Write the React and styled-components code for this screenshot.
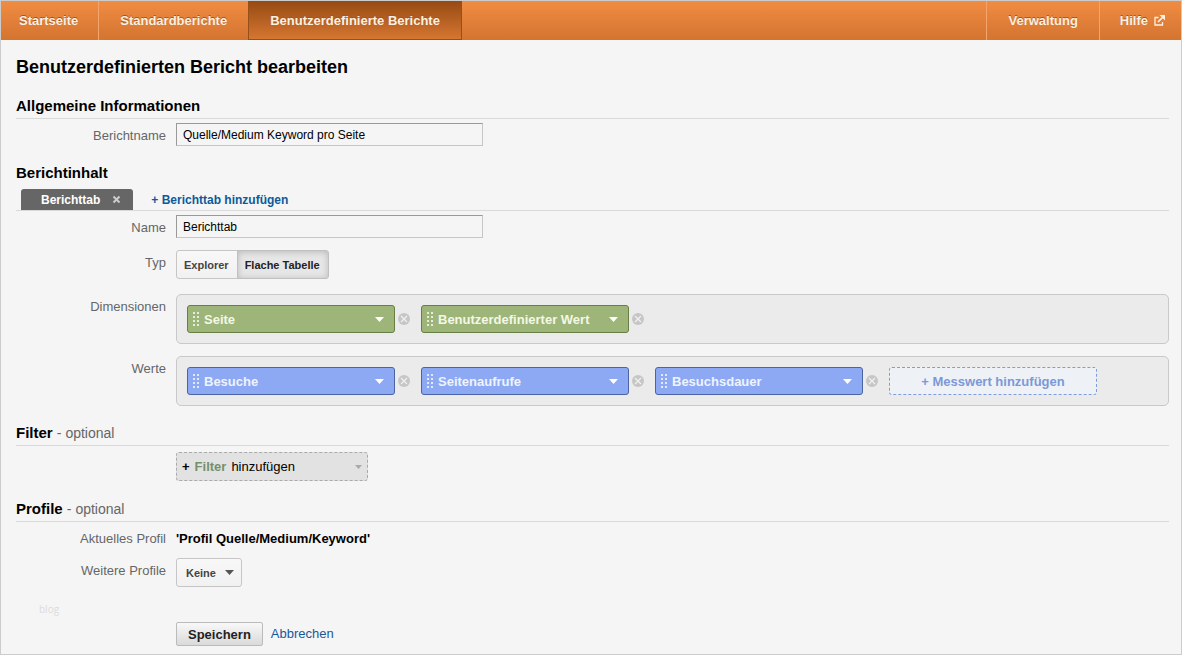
import React, { useState } from "react";
import styled, { createGlobalStyle, css } from "styled-components";

const GlobalStyle = createGlobalStyle`
  *, *::before, *::after { box-sizing: border-box; }
  body {
    margin: 0;
    background: #f5f5f5;
    color: #000;
    font-family: "Liberation Sans", Arial, sans-serif;
    font-size: 13px;
    line-height: 16px;
  }
  button, input, select { font-family: inherit; }
`;

const Frame = styled.div`
  min-height: 100vh;
  border: 1px solid #ccc;
  background: #f5f5f5;
`;

const NavBar = styled.nav`
  display: flex;
  justify-content: space-between;
  height: 39px;
  background: linear-gradient(#f18c42, #d37430);
`;

const NavGroup = styled.div`
  display: flex;
`;

const NavLink = styled.a`
  display: flex;
  align-items: center;
  gap: 6px;
  padding: 0 21px;
  color: #fdf0e0;
  font-size: 13px;
  font-weight: bold;
  text-decoration: none;
  text-shadow: 0 -1px 0 #a0561f;
  border-left: 1px solid ${(p) => (p.$first ? "transparent" : "#f3a56c")};
  ${(p) => p.$first && css`
    padding: 0 20px 0 17px;
  `}
  ${(p) => p.$last && css`
    padding: 0 16px 0 20px;
  `}
  ${(p) => p.$active && css`
    padding: 1px 21px 0;
    border: 1px solid #96501a;
    border-top: 0;
    background: linear-gradient(#964a14, #d67631);
  `}
`;

const Main = styled.main`
  padding: 15px 12px 8px 15px;
`;

const PageTitle = styled.h1`
  margin: 0;
  font-size: 18px;
  line-height: 24px;
`;

const SectionTitle = styled.h2`
  margin: 17px 0 0;
  padding-bottom: ${(p) => (p.$plain ? "6px" : "2px")};
  border-bottom: ${(p) => (p.$plain ? "0" : "1px solid #d9d9d9")};
  font-size: 15px;
  line-height: 20px;
`;

const Optional = styled.span`
  color: #666;
  font-size: 14px;
  font-weight: normal;
`;

const Fields = styled.div`
  display: grid;
  gap: ${(p) => p.$gap || "12px"};
  padding-top: ${(p) => p.$top || "4px"};
`;

const Field = styled.div`
  display: grid;
  grid-template-columns: 150px minmax(0, 1fr);
  column-gap: 10px;
  align-items: start;
`;

const FieldLabel = styled.label`
  padding-top: ${(p) => (p.$text ? "0" : "5px")};
  color: #666;
  font-size: 13px;
  line-height: 16px;
  text-align: right;
`;

const TextInput = styled.input`
  width: 307px;
  max-width: 100%;
  height: 23px;
  padding: 0 6px;
  border: 1px solid;
  border-color: #999 #c6c6c6 #c6c6c6 #999;
  border-radius: 0;
  background: #f5f5f5;
  color: #000;
  font-size: 12px;
`;

const TabBar = styled.div`
  display: flex;
  align-items: stretch;
  height: 22px;
  padding-left: 5px;
  border-bottom: 1px solid #d9d9d9;
`;

const Tab = styled.div`
  display: flex;
  align-items: center;
  gap: 12px;
  padding: 0 12px 0 20px;
  border-radius: 3px 3px 0 0;
  background: #666;
  color: #fff;
  font-size: 12px;
  font-weight: bold;
`;

const IconButton = styled.button`
  display: flex;
  padding: 0;
  border: 0;
  background: none;
  cursor: pointer;
`;

const AddTab = styled.a`
  align-self: center;
  margin-left: 18px;
  color: #0b5a9a;
  font-size: 12px;
  font-weight: bold;
  text-decoration: none;
`;

const ButtonGroup = styled.div`
  display: flex;
  margin-bottom: 3px;
`;

const Toggle = styled.button`
  height: 29px;
  padding: 0 8px 0 7px;
  border: 1px solid #c6c6c6;
  border-radius: 3px 0 0 3px;
  background: linear-gradient(#f8f8f8, #f1f1f1);
  color: #444;
  font-size: 11px;
  font-weight: bold;
  & + & {
    margin-left: -1px;
    border-radius: 0 3px 3px 0;
  }
  ${(p) => p.$on && css`
    background: #e6e6e6;
    border-color: #c0c0c0;
    color: #222;
    box-shadow: inset 0 1px 6px rgba(0, 0, 0, 0.2);
  `}
`;

const ChipBox = styled.div`
  display: flex;
  flex-wrap: wrap;
  gap: 10px 11px;
  padding: 10px;
  border: 1px solid #c9c9c9;
  border-radius: 5px;
  background: #ebebeb;
`;

const ChipItem = styled.div`
  display: flex;
  align-items: center;
  gap: 3px;
`;

const Chip = styled.div`
  display: flex;
  align-items: center;
  position: relative;
  width: 208px;
  height: 28px;
  padding-left: 5px;
  border: 1px solid ${(p) => (p.$green ? "#677f45" : "#4a64a4")};
  border-radius: 3px;
  background: ${(p) => (p.$green ? "#9db578" : "#8da9f4")};
`;

const ChipSelect = styled.select`
  flex: 1;
  min-width: 0;
  height: 26px;
  padding: 0 24px 0 5px;
  border: 0;
  appearance: none;
  background: none;
  color: ${(p) => (p.$green ? "#f3f8e6" : "#eef3ff")};
  font-size: 13px;
  font-weight: bold;
`;

const Caret = styled.svg`
  position: absolute;
  right: ${(p) => p.$right};
  pointer-events: none;
`;

const AddChip = styled.button`
  width: 208px;
  height: 28px;
  padding: 0;
  border: 1px dashed #7f9cdc;
  border-radius: 3px;
  background: #eef2f6;
  color: #7c98d8;
  font-size: 13px;
  font-weight: bold;
`;

const FilterButton = styled.button`
  display: flex;
  align-items: center;
  gap: 5px;
  position: relative;
  width: 192px;
  height: 29px;
  margin-bottom: 1px;
  padding: 0 5px;
  border: 1px dashed #aaa;
  border-radius: 3px;
  background: #e2e2e2;
  color: #000;
  font-size: 13px;
  strong { color: #74906c; }
`;

const ProfileName = styled.strong`
  font-size: 13px;
`;

const SmallSelect = styled.div`
  display: flex;
  align-items: center;
  position: relative;
  width: 66px;
  height: 29px;
  select {
    width: 100%;
    height: 100%;
    padding: 0 20px 0 9px;
    border: 1px solid #c6c6c6;
    border-radius: 3px;
    appearance: none;
    background: linear-gradient(#f8f8f8, #f1f1f1);
    color: #444;
    font-size: 11px;
    font-weight: bold;
  }
`;

const Watermark = styled.p`
  margin: 16px 0 7px 23px;
  color: #dcdcdc;
  font-family: "Open Sans", sans-serif;
  font-size: 10px;
  line-height: 12px;
`;

const Actions = styled.div`
  display: flex;
  align-items: center;
  gap: 8px;
  padding-left: 160px;
`;

const SaveButton = styled.button`
  height: 24px;
  padding: 0 11px;
  border: 1px solid #bbb;
  border-radius: 2px;
  background: linear-gradient(#f8f8f8, #dadada);
  color: #222;
  font-size: 13px;
  font-weight: bold;
`;

const CancelLink = styled.a`
  color: #15599a;
  font-size: 13px;
  text-decoration: none;
`;

function Triangle({ color, right, w = 9, h = 5 }) {
  return (
    <Caret $right={right} width={w} height={h} viewBox="0 0 9 5" aria-hidden="true">
      <path d="M0 0h9L4.500 5z" fill={color} />
    </Caret>
  );
}

function Handle() {
  return (
    <svg width="6" height="14" viewBox="0 0 6 14" fill="#fff" fillOpacity="0.75" aria-hidden="true">
      {[0, 4, 8, 12].map((y) => (
        <React.Fragment key={y}>
          <rect x="0" y={y} width="2" height="2" />
          <rect x="4" y={y} width="2" height="2" />
        </React.Fragment>
      ))}
    </svg>
  );
}

function ChipField({ name, green }) {
  return (
    <ChipItem>
      <Chip $green={green}>
        <Handle />
        <ChipSelect $green={green} aria-label={name} defaultValue={name}>
          <option>{name}</option>
        </ChipSelect>
        <Triangle color="#fff" right="10px" />
      </Chip>
      <IconButton type="button" aria-label={`${name} entfernen`}>
        <svg width="12" height="12" viewBox="0 0 12 12">
          <circle cx="6" cy="6" r="6" fill="#c6c6c6" />
          <path d="M3 3l6 6M9 3l-6 6" stroke="#f0f0f0" strokeWidth="1.300" />
        </svg>
      </IconButton>
    </ChipItem>
  );
}

export default function App() {
  const [type, setType] = useState("Flache Tabelle");
  return (
    <>
      <GlobalStyle />
      <Frame>
        <NavBar>
          <NavGroup>
            <NavLink href="#start" $first>Startseite</NavLink>
            <NavLink href="#standard">Standardberichte</NavLink>
            <NavLink href="#custom" $active aria-current="page">Benutzerdefinierte Berichte</NavLink>
          </NavGroup>
          <NavGroup>
            <NavLink href="#admin">Verwaltung</NavLink>
            <NavLink href="#help" $last>
              Hilfe
              <svg width="11" height="11" viewBox="0 0 11 11" fill="none" aria-hidden="true">
                <path d="M4.500 2.500H1v7.500h7.500V7" stroke="#fdf0e0" strokeWidth="1.300" />
                <path d="M4 7L8.500 2.500" stroke="#fdf0e0" strokeWidth="1.700" />
                <path d="M5.500 0H11v5.500z" fill="#fdf0e0" />
              </svg>
            </NavLink>
          </NavGroup>
        </NavBar>
        <Main>
          <PageTitle>Benutzerdefinierten Bericht bearbeiten</PageTitle>

          <SectionTitle>Allgemeine Informationen</SectionTitle>
          <Fields>
            <Field>
              <FieldLabel htmlFor="report-name">Berichtname</FieldLabel>
              <TextInput id="report-name" defaultValue="Quelle/Medium Keyword pro Seite" />
            </Field>
          </Fields>

          <SectionTitle $plain>Berichtinhalt</SectionTitle>
          <TabBar>
            <Tab>
              Berichttab
              <IconButton type="button" aria-label="Berichttab schließen">
                <svg width="9" height="9" viewBox="0 0 9 9">
                  <path d="M1.500 1.500l6 6M7.500 1.500l-6 6" stroke="#ccc" strokeWidth="2" />
                </svg>
              </IconButton>
            </Tab>
            <AddTab href="#add-tab">+ Berichttab hinzufügen</AddTab>
          </TabBar>
          <Fields>
            <Field>
              <FieldLabel htmlFor="tab-name">Name</FieldLabel>
              <TextInput id="tab-name" defaultValue="Berichttab" />
            </Field>
            <Field>
              <FieldLabel as="span" id="type-label">Typ</FieldLabel>
              <ButtonGroup role="group" aria-labelledby="type-label">
                {["Explorer", "Flache Tabelle"].map((t) => (
                  <Toggle key={t} type="button" $on={t === type} aria-pressed={t === type} onClick={() => setType(t)}>
                    {t}
                  </Toggle>
                ))}
              </ButtonGroup>
            </Field>
            <Field>
              <FieldLabel as="span" id="dimensions-label">Dimensionen</FieldLabel>
              <ChipBox role="group" aria-labelledby="dimensions-label">
                <ChipField green name="Seite" />
                <ChipField green name="Benutzerdefinierter Wert" />
              </ChipBox>
            </Field>
            <Field>
              <FieldLabel as="span" id="metrics-label">Werte</FieldLabel>
              <ChipBox role="group" aria-labelledby="metrics-label">
                <ChipField name="Besuche" />
                <ChipField name="Seitenaufrufe" />
                <ChipField name="Besuchsdauer" />
                <AddChip type="button">+ Messwert hinzufügen</AddChip>
              </ChipBox>
            </Field>
          </Fields>

          <SectionTitle>Filter <Optional>- optional</Optional></SectionTitle>
          <Fields $top="6px">
            <Field>
              <span />
              <FilterButton type="button">
                <b>+</b>
                <strong>Filter</strong>
                <span>hinzufügen</span>
                <Triangle color="#aaa" right="5px" w={7} h={4} />
              </FilterButton>
            </Field>
          </Fields>

          <SectionTitle>Profile <Optional>- optional</Optional></SectionTitle>
          <Fields $top="9px" $gap="11px">
            <Field>
              <FieldLabel as="span" $text>Aktuelles Profil</FieldLabel>
              <ProfileName>'Profil Quelle/Medium/Keyword'</ProfileName>
            </Field>
            <Field>
              <FieldLabel htmlFor="more-profiles">Weitere Profile</FieldLabel>
              <SmallSelect>
                <select id="more-profiles" defaultValue="Keine">
                  <option>Keine</option>
                </select>
                <Triangle color="#555" right="8px" />
              </SmallSelect>
            </Field>
          </Fields>

          <Watermark>blog</Watermark>
          <Actions>
            <SaveButton type="button">Speichern</SaveButton>
            <CancelLink href="#cancel">Abbrechen</CancelLink>
          </Actions>
        </Main>
      </Frame>
    </>
  );
}
